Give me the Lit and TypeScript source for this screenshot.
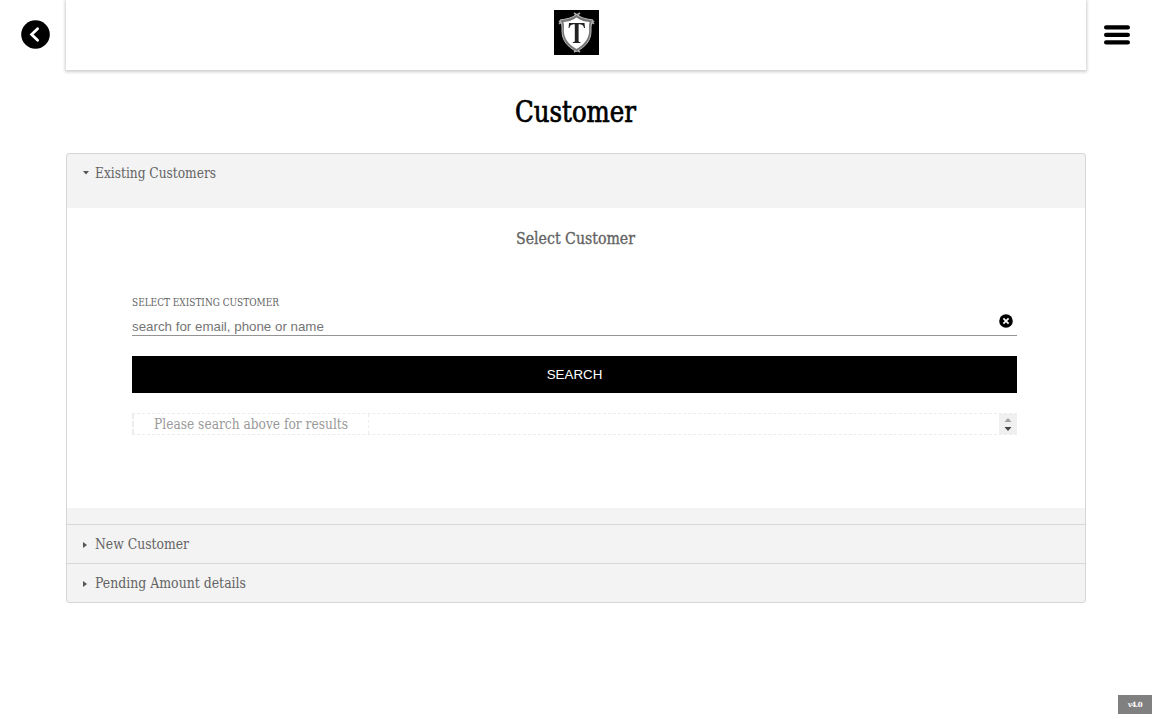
import { LitElement, html, css, svg } from "lit";
import { customElement, property } from "lit/decorators.js";

/** A line of slab text set to an exact measure. */
@customElement("slab-text")
class SlabText extends LitElement {
  @property() text = "";
  @property({ type: Number }) measure = 100;
  @property({ type: Number }) size = 15;
  @property({ type: Number }) weight = 0;
  static styles = css`
    :host { display: block; flex: none; }
    svg { display: block; overflow: visible; }
    text { font-family: "DejaVu Serif Condensed", "DejaVu Serif", serif; font-stretch: condensed; fill: currentColor; stroke: currentColor; }
  `;
  render() {
    return html`<svg width=${this.measure} height=${Math.round(this.size * 1.25)}>
      ${svg`<text x="0" y=${Math.round(this.size * 0.9)} font-size=${this.size} stroke-width=${this.weight} textLength=${this.measure} lengthAdjust="spacingAndGlyphs">${this.text}</text>`}
    </svg>`;
  }
}

@customElement("app-root")
class AppRoot extends LitElement {
  static styles = css`
    :host { display: block; height: 719px; background: #fff; color: #636363; overflow: hidden; position: relative; font-family: "Liberation Sans", Arial, sans-serif; }
    * { box-sizing: border-box; }
    svg { display: block; }
    .top { display: grid; grid-template-columns: 66px 1020px 66px; height: 70px; }
    .back { padding: 20px 0 0 21px; }
    .bar { background: #fff; box-shadow: 0 1px 3px 1px rgba(0, 0, 0, 0.2); display: flex; justify-content: center; padding-top: 10px; }
    .menu { padding: 25px 0 0 18px; }
    .title { color: #000; display: flex; justify-content: center; padding: 25px 2px 0 0; height: 83px; }
    .accordion { width: 1020px; height: 450px; margin: 0 auto; border: 1px solid #d6d6d6; border-radius: 3px; background: #f3f3f3; overflow: hidden; }
    .open { height: 370px; }
    .row { display: flex; height: 39px; border-top: 1px solid #d6d6d6; padding: 10px 0 0 15px; gap: 5px; }
    .open .row { height: 54px; border: 0; }
    .row svg { margin-top: 6px; }
    .open .row svg { margin-top: 5px; }
    .panel { background: #fff; height: 300px; padding: 20px 68px 0 65px; }
    .heading { display: flex; justify-content: center; height: 67px; padding-left: 1px; }
    .field { display: flex; justify-content: space-between; height: 41px; border-bottom: 1px solid #949494; padding-top: 1px; }
    .hint { font-size: 13.333px; line-height: 15px; color: #757575; margin-top: 9px; white-space: nowrap; }
    .clear { margin: 18px 4px 0 0; }
    .search { display: block; width: 100%; height: 37px; margin: 20px 0; border: 0; padding: 0; background: #000; color: #fff; font: 13.333px "Liberation Sans", Arial, sans-serif; }
    .results { display: flex; justify-content: space-between; height: 22px; border: 1px dashed #ececec; border-left-width: 2px; border-right: 0; color: #999; }
    .option { width: 235px; border-right: 1px dashed #ececec; padding: 1px 0 0 20px; }
    .spin { background: #f0f0f0; width: 18px; display: flex; justify-content: center; }
    .version { position: absolute; right: 0; top: 695px; width: 34px; height: 19px; background: #808080; color: #fff; font: bold 7px/19px "DejaVu Serif", serif; letter-spacing: -0.6px; text-align: center; }
  `;

  arrow(open: boolean) {
    return html`<svg width="8" height="8" fill="#555"><path d=${open ? "M1 2H7L4 5.5Z" : "M1 1L5 4L1 7Z"} /></svg>`;
  }

  row(label: string, measure: number, open = false) {
    return html`<div class="row">${this.arrow(open)}<slab-text text=${label} measure=${measure} size="15.5"></slab-text></div>`;
  }

  render() {
    return html`
      <header class="top">
        <div class="back">
          <svg width="29" height="29" viewBox="0 0 29 29"><circle cx="14.5" cy="14.5" r="14.3" /><path d="M16.6 8.8L10.6 14.5L16.6 20.2" fill="none" stroke="#fff" stroke-width="2.8" stroke-linecap="round" /></svg>
        </div>
        <div class="bar">
          <svg width="45" height="45" viewBox="0 0 45 45">
            <rect width="45" height="45" />
            <g fill="none" stroke="#aaa" stroke-width="1.6"><path d="M20 3L26 7M26 3L20 7M20 38L26 42M26 38L20 42M5 14L9 10M5 11L9 15M36 10L40 14M40 11L36 15" /></g>
            <path d="M22.5 4.5C18 8 13 9 6 10C8 13 8 16 8 21C8 31 14 37 22.5 41.5C31 37 37 31 37 21C37 16 37 13 39 10C32 9 27 8 22.5 4.5Z" fill="#777" stroke="#bbb" />
            <path d="M22.5 7.5C18 10.5 15 11.5 9.5 12C10.5 16 9.5 19 10 23C11 30 16 35.5 22.5 39C29 35.5 34 30 35 23C35.5 19 34.5 16 35.5 12C30 11.5 27 10.5 22.5 7.5Z" fill="#fff" />
            <path d="M15 13H30.5L31 18H30C29.5 15 28 14.2 24.6 14.2V31C24.6 32 25.5 32 26.5 32.2V33H18.8V32.2C20 32 20.8 32 20.8 31V14.2C17.5 14.2 16 15 15.5 18H14.6Z" fill="#222" />
          </svg>
        </div>
        <div class="menu">
          <svg width="26" height="20" stroke="#000" stroke-width="4.2" stroke-linecap="round"><path d="M2.1 2.4H23.9M2.1 9.9H23.9M2.1 17.4H23.9" /></svg>
        </div>
      </header>
      <div class="title"><slab-text text="Customer" measure="121" size="30" weight="0.7"></slab-text></div>
      <main class="accordion">
        <section class="open">
          ${this.row("Existing Customers", 121, true)}
          <div class="panel">
            <div class="heading"><slab-text text="Select Customer" measure="119" size="17.5" weight="0.35"></slab-text></div>
            <div class="field">
              <div>
                <slab-text text="SELECT EXISTING CUSTOMER" measure="147" size="11"></slab-text>
                <div class="hint">search for email, phone or name</div>
              </div>
              <svg class="clear" width="14" height="14"><circle cx="7" cy="7" r="6.8" /><path d="M4.4 4.4L9.6 9.6M9.6 4.4L4.4 9.6" stroke="#fff" stroke-width="1.7" /></svg>
            </div>
            <button class="search">SEARCH</button>
            <div class="results">
              <div class="option"><slab-text text="Please search above for results" measure="194" size="15.5"></slab-text></div>
              <div class="spin"><svg width="8" height="20"><path d="M0.5 8L4 4L7.5 8Z" fill="#a0a0a0" /><path d="M0.5 13L4 17L7.5 13Z" fill="#444" /></svg></div>
            </div>
          </div>
        </section>
        ${this.row("New Customer", 94)} ${this.row("Pending Amount details", 151)}
      </main>
      <div class="version">v4.0</div>
    `;
  }
}
